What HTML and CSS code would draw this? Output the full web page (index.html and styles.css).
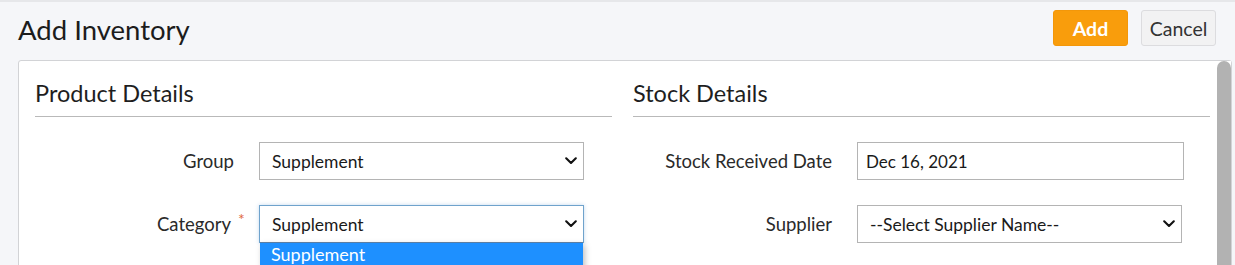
FILE: index.html
```html
<!DOCTYPE html>
<html lang="en">
<head>
<meta charset="utf-8">
<title>Add Inventory</title>
<link rel="stylesheet" href="styles.css">
</head>
<body>
<div class="page">
  <header class="topbar">
    <h1 class="title">Add Inventory</h1>
    <div class="actions">
      <button class="btn btn-primary" type="button">Add</button>
      <button class="btn btn-default" type="button">Cancel</button>
    </div>
  </header>
  <section class="card">
    <div class="card-body">
      <div class="col">
        <h2 class="section-title">Product Details</h2>
        <div class="form-rows">
          <div class="form-row">
            <label class="form-label">Group</label>
            <div class="select">
              <span class="select-value">Supplement</span>
              <svg class="chevron" width="12" height="8" viewBox="0 0 12 8"><path d="M1.2 1.3 L6 6 L10.8 1.3" fill="none" stroke="#111" stroke-width="2.1" stroke-linecap="round" stroke-linejoin="round"/></svg>
            </div>
          </div>
          <div class="form-row">
            <label class="form-label"><span class="label-text">Category<span class="req">*</span></span></label>
            <div class="select-wrap">
              <div class="select focused">
                <span class="select-value">Supplement</span>
                <svg class="chevron" width="12" height="8" viewBox="0 0 12 8"><path d="M1.2 1.3 L6 6 L10.8 1.3" fill="none" stroke="#111" stroke-width="2.1" stroke-linecap="round" stroke-linejoin="round"/></svg>
              </div>
              <ul class="listbox">
                <li class="option selected">Supplement</li>
                <li class="option">Medicine</li>
                <li class="option">Consumable</li>
              </ul>
            </div>
          </div>
        </div>
      </div>
      <div class="col">
        <h2 class="section-title">Stock Details</h2>
        <div class="form-rows">
          <div class="form-row">
            <label class="form-label">Stock Received Date</label>
            <div class="input">Dec 16, 2021</div>
          </div>
          <div class="form-row">
            <label class="form-label">Supplier</label>
            <div class="select">
              <span class="select-value">--Select Supplier Name--</span>
              <svg class="chevron" width="12" height="8" viewBox="0 0 12 8"><path d="M1.2 1.3 L6 6 L10.8 1.3" fill="none" stroke="#111" stroke-width="2.1" stroke-linecap="round" stroke-linejoin="round"/></svg>
            </div>
          </div>
        </div>
      </div>
    </div>
    <div class="scrollbar"><div class="scroll-thumb"></div></div>
  </section>
</div>
</body>
</html>
```

FILE: styles.css
```css
html, body {
  margin: 0;
  padding: 0;
  height: 265px;
  overflow: hidden;
  background: #f5f6f9;
  font-family: Lato, "Open Sans", sans-serif;
  color: #222;
}

.page {
  border-top: 2px solid #e6e7ea;
  padding: 0 3px 0 18px;
}

.topbar {
  display: flex;
  align-items: center;
  justify-content: space-between;
  padding: 8px 16px 0 0;
  height: 36px;
  margin-bottom: 14px;
}

.title {
  margin: 0;
  padding-top: 4px;
  font-size: 27.5px;
  font-weight: 400;
  color: #1c1c1c;
  line-height: 36px;
}

.actions {
  display: flex;
  gap: 13px;
}

.btn {
  width: 75px;
  height: 36px;
  border-radius: 3px;
  font-family: Lato, sans-serif;
  padding: 0;
  cursor: pointer;
}

.btn-primary {
  background: #f99d0c;
  border: 1px solid #f3970a;
  color: #fff;
  font-size: 19.5px;
  font-weight: 700;
}

.btn-default {
  background: #f2f2f3;
  border: 1px solid #dcdcdf;
  color: #333;
  font-size: 19.5px;
  font-weight: 400;
}

.card {
  display: flex;
  background: #fff;
  border: 1px solid #d2d3d6;
  border-radius: 3px 3px 0 0;
  height: 480px;
}

.card-body {
  flex: 1;
  display: grid;
  grid-template-columns: 1fr 1fr;
  gap: 21px;
  padding: 0 7px 0 16px;
  align-content: start;
}

.scrollbar {
  width: 14px;
  flex: none;
  background: #fff;
}

.scroll-thumb {
  height: 330px;
  background: #b2b2b2;
  border-radius: 7px;
}

.section-title {
  margin: 0;
  padding: 19px 0 10px;
  font-size: 23.5px;
  line-height: 26px;
  font-weight: 400;
  color: #1e1e1e;
  border-bottom: 1px solid #b9b9b9;
}

.form-rows {
  display: flex;
  flex-direction: column;
  gap: 25px;
  margin-top: 25px;
}

.form-row {
  display: grid;
  grid-template-columns: 224px auto;
  align-items: center;
}

.form-label {
  text-align: right;
  padding-right: 25px;
  font-size: 18.5px;
  color: #2a2a2a;
}

.label-text {
  position: relative;
  margin-right: 3px;
}

.req {
  position: absolute;
  left: calc(100% + 7px);
  top: -4px;
  font-size: 16px;
  color: #e0673c;
}

.select,
.input {
  box-sizing: border-box;
  height: 38px;
  border: 1px solid #b4b4b4;
  background: #fff;
  display: flex;
  align-items: center;
  color: #1a1a1a;
}

.select {
  width: 325px;
  justify-content: space-between;
  padding: 0 6px 0 12px;
  font-size: 17.5px;
}

.input {
  width: 327px;
  padding: 0 8px;
  font-size: 17px;
}

.select.focused {
  border-color: #6fa3cc;
  box-shadow: 0 0 4px rgba(120, 170, 220, 0.45);
}

.select-wrap {
  position: relative;
  width: 325px;
}

.listbox {
  position: absolute;
  top: 37px;
  left: 1px;
  width: 323px;
  margin: 0;
  padding: 0;
  list-style: none;
  background: #fff;
  border-top: 1px solid #5b7ea3;
  box-shadow: 2px 3px 6px rgba(0, 0, 0, 0.25);
  z-index: 5;
}

.option {
  padding: 0 12px 0 11px;
  height: 22px;
  line-height: 22px;
  font-size: 18px;
  color: #1a1a1a;
}

.option.selected {
  background: #1e90ff;
  color: #fff;
}
```
